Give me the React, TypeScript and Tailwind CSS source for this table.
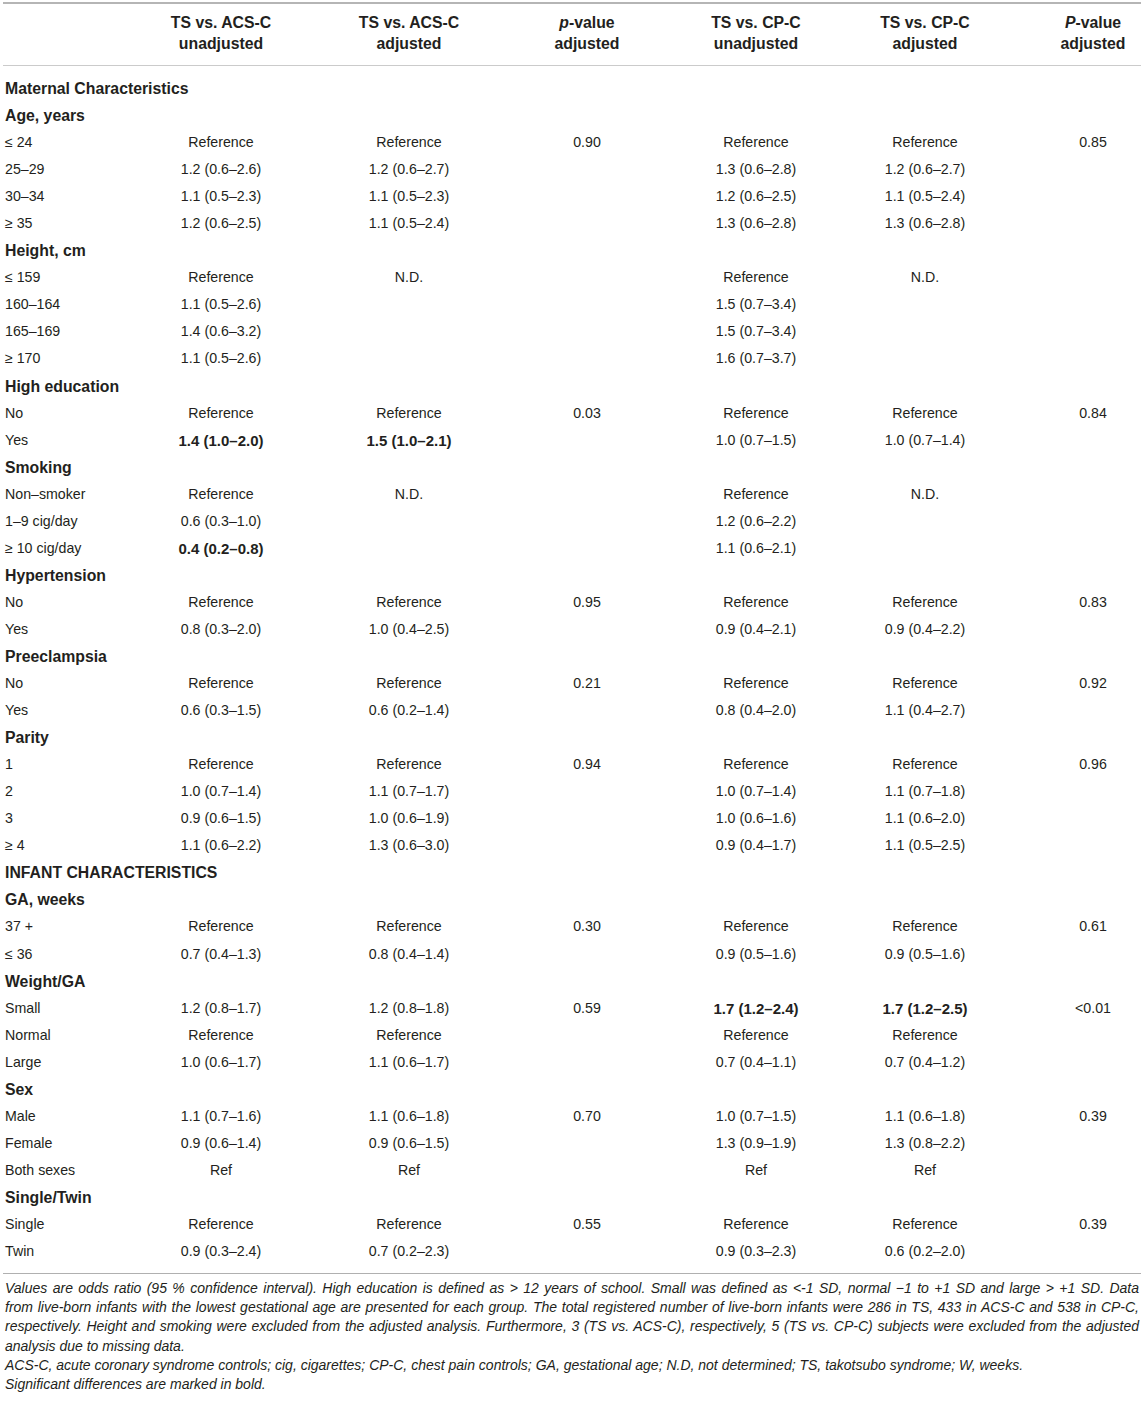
type Cell = string | { b: string };

type Row =
  | { kind: "section"; label: string }
  | { kind: "data"; label: string; cells: Cell[] };

const GRID = "grid grid-cols-[124px_188px_188px_168px_170px_168px_1fr]";

const sec = (label: string): Row => ({ kind: "section", label });
const row = (label: string, ...cells: Cell[]): Row => ({ kind: "data", label, cells });
const R = "Reference";

const ROWS: Row[] = [
  sec("Maternal Characteristics"),
  sec("Age, years"),
  row("≤ 24", R, R, "0.90", R, R, "0.85"),
  row("25–29", "1.2 (0.6–2.6)", "1.2 (0.6–2.7)", "", "1.3 (0.6–2.8)", "1.2 (0.6–2.7)", ""),
  row("30–34", "1.1 (0.5–2.3)", "1.1 (0.5–2.3)", "", "1.2 (0.6–2.5)", "1.1 (0.5–2.4)", ""),
  row("≥ 35", "1.2 (0.6–2.5)", "1.1 (0.5–2.4)", "", "1.3 (0.6–2.8)", "1.3 (0.6–2.8)", ""),
  sec("Height, cm"),
  row("≤ 159", R, "N.D.", "", R, "N.D.", ""),
  row("160–164", "1.1 (0.5–2.6)", "", "", "1.5 (0.7–3.4)", "", ""),
  row("165–169", "1.4 (0.6–3.2)", "", "", "1.5 (0.7–3.4)", "", ""),
  row("≥ 170", "1.1 (0.5–2.6)", "", "", "1.6 (0.7–3.7)", "", ""),
  sec("High education"),
  row("No", R, R, "0.03", R, R, "0.84"),
  row("Yes", { b: "1.4 (1.0–2.0)" }, { b: "1.5 (1.0–2.1)" }, "", "1.0 (0.7–1.5)", "1.0 (0.7–1.4)", ""),
  sec("Smoking"),
  row("Non–smoker", R, "N.D.", "", R, "N.D.", ""),
  row("1–9 cig/day", "0.6 (0.3–1.0)", "", "", "1.2 (0.6–2.2)", "", ""),
  row("≥ 10 cig/day", { b: "0.4 (0.2–0.8)" }, "", "", "1.1 (0.6–2.1)", "", ""),
  sec("Hypertension"),
  row("No", R, R, "0.95", R, R, "0.83"),
  row("Yes", "0.8 (0.3–2.0)", "1.0 (0.4–2.5)", "", "0.9 (0.4–2.1)", "0.9 (0.4–2.2)", ""),
  sec("Preeclampsia"),
  row("No", R, R, "0.21", R, R, "0.92"),
  row("Yes", "0.6 (0.3–1.5)", "0.6 (0.2–1.4)", "", "0.8 (0.4–2.0)", "1.1 (0.4–2.7)", ""),
  sec("Parity"),
  row("1", R, R, "0.94", R, R, "0.96"),
  row("2", "1.0 (0.7–1.4)", "1.1 (0.7–1.7)", "", "1.0 (0.7–1.4)", "1.1 (0.7–1.8)", ""),
  row("3", "0.9 (0.6–1.5)", "1.0 (0.6–1.9)", "", "1.0 (0.6–1.6)", "1.1 (0.6–2.0)", ""),
  row("≥ 4", "1.1 (0.6–2.2)", "1.3 (0.6–3.0)", "", "0.9 (0.4–1.7)", "1.1 (0.5–2.5)", ""),
  sec("INFANT CHARACTERISTICS"),
  sec("GA, weeks"),
  row("37 +", R, R, "0.30", R, R, "0.61"),
  row("≤ 36", "0.7 (0.4–1.3)", "0.8 (0.4–1.4)", "", "0.9 (0.5–1.6)", "0.9 (0.5–1.6)", ""),
  sec("Weight/GA"),
  row("Small", "1.2 (0.8–1.7)", "1.2 (0.8–1.8)", "0.59", { b: "1.7 (1.2–2.4)" }, { b: "1.7 (1.2–2.5)" }, "<0.01"),
  row("Normal", R, R, "", R, R, ""),
  row("Large", "1.0 (0.6–1.7)", "1.1 (0.6–1.7)", "", "0.7 (0.4–1.1)", "0.7 (0.4–1.2)", ""),
  sec("Sex"),
  row("Male", "1.1 (0.7–1.6)", "1.1 (0.6–1.8)", "0.70", "1.0 (0.7–1.5)", "1.1 (0.6–1.8)", "0.39"),
  row("Female", "0.9 (0.6–1.4)", "0.9 (0.6–1.5)", "", "1.3 (0.9–1.9)", "1.3 (0.8–2.2)", ""),
  row("Both sexes", "Ref", "Ref", "", "Ref", "Ref", ""),
  sec("Single/Twin"),
  row("Single", R, R, "0.55", R, R, "0.39"),
  row("Twin", "0.9 (0.3–2.4)", "0.7 (0.2–2.3)", "", "0.9 (0.3–2.3)", "0.6 (0.2–2.0)", ""),
];

// footnote lines are fixed, the last one of the block is not stretched
const NOTE_LINES = [
  "Values are odds ratio (95 % confidence interval). High education is defined as > 12 years of school. Small was defined as <-1 SD, normal −1 to +1 SD and large > +1 SD. Data",
  "from live-born infants with the lowest gestational age are presented for each group. The total registered number of live-born infants were 286 in TS, 433 in ACS-C and 538 in CP-C,",
  "respectively. Height and smoking were excluded from the adjusted analysis. Furthermore, 3 (TS vs. ACS-C), respectively, 5 (TS vs. CP-C) subjects were excluded from the adjusted",
];

function HeaderCell({ top, bottom, last }: { top: React.ReactNode; bottom: string; last?: boolean }) {
  return (
    <div className={`text-center ${last ? "pl-9" : ""}`}>
      <div>{top}</div>
      <div>{bottom}</div>
    </div>
  );
}

export default function App() {
  return (
    <div
      className="min-h-[1402px] bg-white px-[3px] pt-[2px] text-[#231f20]"
      style={{ fontFamily: '"Liberation Sans", Arial, Helvetica, sans-serif' }}
    >
      <div className="border-t-2 border-[#b5b5b5]">
        {/* kop */}
        <div className={`${GRID} border-b border-[#cbcbcb] pt-2 pb-[11px] text-[15.8px] font-bold leading-[21px]`}>
          <div />
          <HeaderCell top="TS vs. ACS-C" bottom="unadjusted" />
          <HeaderCell top="TS vs. ACS-C" bottom="adjusted" />
          <HeaderCell
            top={
              <>
                <i>p</i>-value
              </>
            }
            bottom="adjusted"
          />
          <HeaderCell top="TS vs. CP-C" bottom="unadjusted" />
          <HeaderCell top="TS vs. CP-C" bottom="adjusted" />
          <HeaderCell
            top={
              <>
                <i>P</i>-value
              </>
            }
            bottom="adjusted"
            last
          />
        </div>

        {/* rijen */}
        <div className="border-b border-[#b0b0b0] pt-[9px] pb-[8px]">
          {ROWS.map((r, i) =>
            r.kind === "section" ? (
              <div key={i} className="h-[27.05px] pl-[2px] text-[15.8px] font-bold leading-[27px]">
                {r.label}
              </div>
            ) : (
              <div key={i} className={`${GRID} h-[27.05px] text-[14.2px] leading-[27px]`}>
                <div className="pl-[2px]">{r.label}</div>
                {r.cells.map((c, j) => (
                  <div key={j} className={`text-center ${j === 5 ? "pl-9" : ""}`}>
                    {typeof c === "string" ? c : <span className="text-[15px] font-bold">{c.b}</span>}
                  </div>
                ))}
              </div>
            )
          )}
        </div>

        {/* voetnoten */}
        <div className="px-[2px] pt-[5px] text-[14px] italic leading-[19.2px]">
          {NOTE_LINES.map((l) => (
            <div key={l} className="text-justify [text-align-last:justify]">
              {l}
            </div>
          ))}
          <div>analysis due to missing data.</div>
          <div>
            ACS-C, acute coronary syndrome controls; cig, cigarettes; CP-C, chest pain controls; GA, gestational age;
            N.D, not determined; TS, takotsubo syndrome; W, weeks.
          </div>
          <div>Significant differences are marked in bold.</div>
        </div>
      </div>
    </div>
  );
}
